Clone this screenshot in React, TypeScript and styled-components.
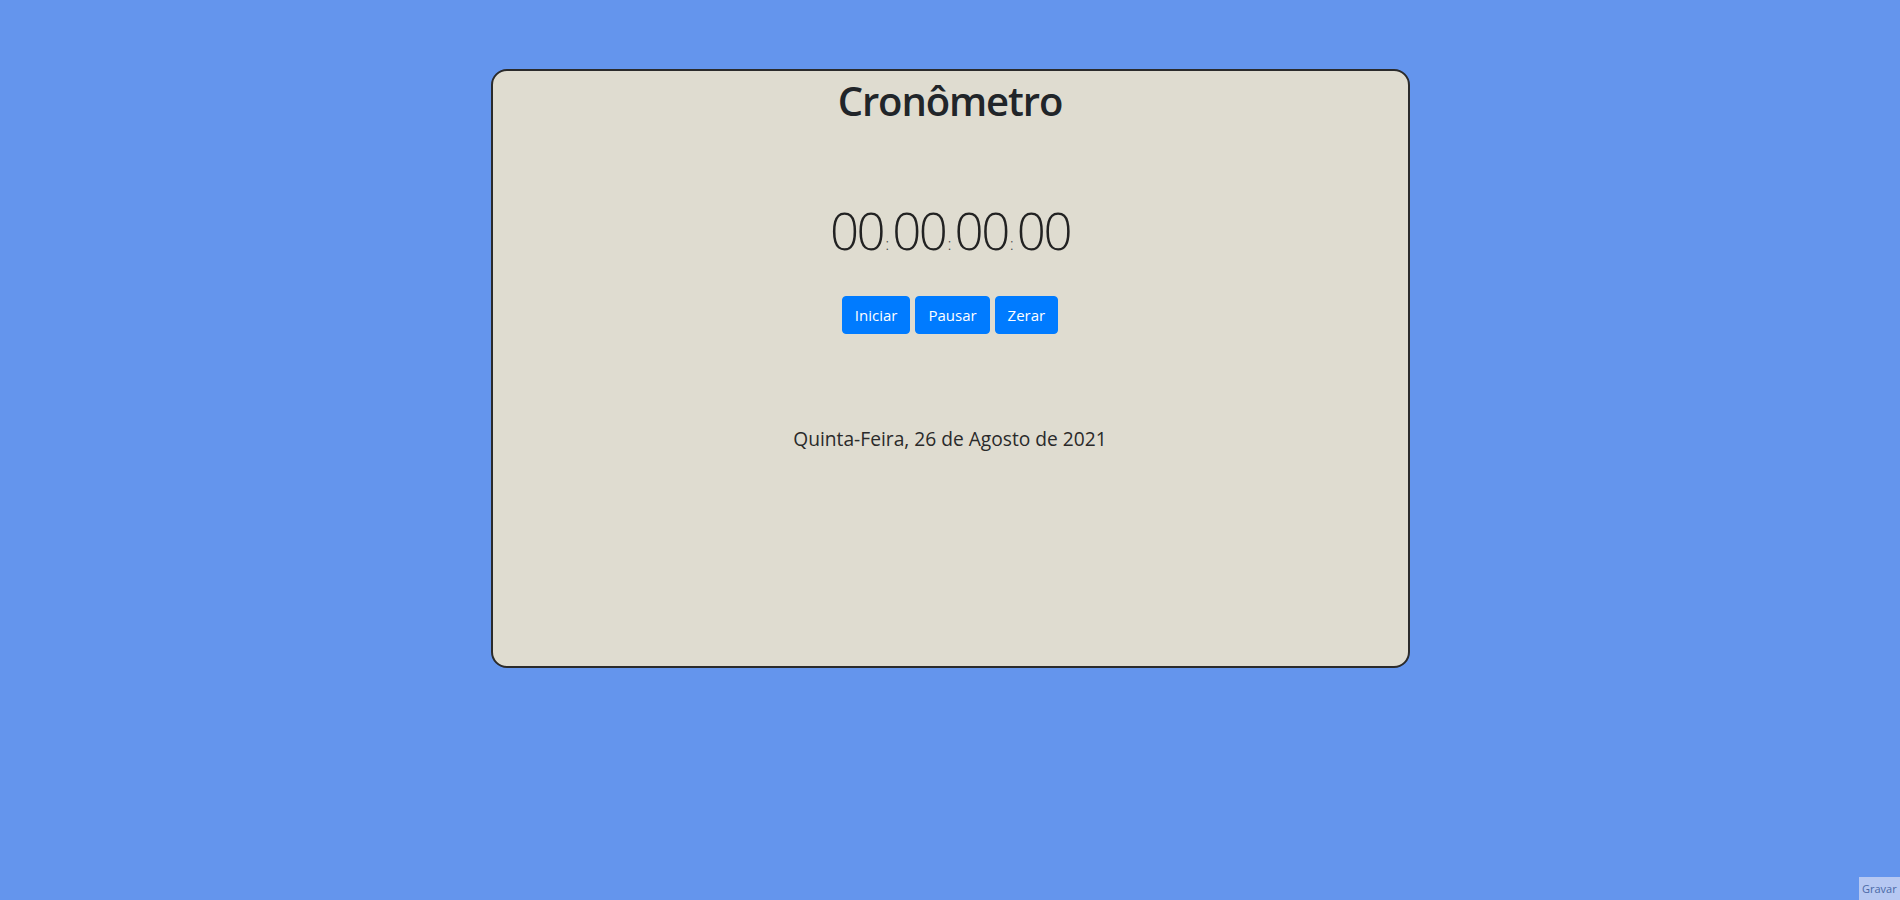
import React from 'react'
import styled, { createGlobalStyle } from 'styled-components'

const GlobalStyle = createGlobalStyle`
  html, body {
    margin: 0;
    padding: 0;
  }
  body {
    font-family: 'Open Sans', 'Noto Sans', sans-serif;
    color: #212529;
    background-color: #6495ed;
  }
`

const App = () => {
  return (
    <>
      <GlobalStyle />
      <Page>
        <Card>
          <Title>Cronômetro</Title>
          <Timer>
            00<Sep>:</Sep>00<Sep>:</Sep>00<Sep>:</Sep>00
          </Timer>
          <Controls>
            <Button>Iniciar</Button>
            <Button>Pausar</Button>
            <Button>Zerar</Button>
          </Controls>
          <DateLine>Quinta-Feira, 26 de Agosto de 2021</DateLine>
        </Card>
      </Page>
      <RecordTab>Gravar</RecordTab>
    </>
  )
}

export default App

const Page = styled.div`
  min-height: 100vh;
  box-sizing: border-box;
  display: flex;
  justify-content: center;
  align-items: flex-start;
  padding-top: 69px;
  background-color: #6495ed;
`

const Card = styled.div`
  width: 919px;
  height: 599px;
  box-sizing: border-box;
  display: flex;
  flex-direction: column;
  align-items: center;
  padding-top: 6px;
  background-color: #dfdcd0;
  border: 2px solid #2b2b2b;
  border-radius: 16px;
`

const Title = styled.h1`
  margin: 0;
  font-size: 40px;
  font-weight: 600;
  line-height: 48px;
  letter-spacing: -1.1px;
`

const Timer = styled.div`
  margin-top: 75px;
  font-size: 51px;
  font-weight: 300;
  line-height: 61px;
  letter-spacing: -2.5px;
  color: #222;
`

const Sep = styled.span`
  display: inline-block;
  margin: 0 3px 0 2px;
  font-size: 17px;
  line-height: 17px;
  letter-spacing: 0;
  color: #444;
`

const Controls = styled.div`
  display: flex;
  gap: 5px;
  margin-top: 35px;
`

const Button = styled.button`
  height: 38px;
  padding: 6px 12px;
  box-sizing: border-box;
  font-family: 'Open Sans', 'Noto Sans', sans-serif;
  font-size: 15px;
  line-height: 24px;
  color: #fff;
  background-color: #007bff;
  border: 1px solid #007bff;
  border-radius: 4px;
  cursor: pointer;
`

const DateLine = styled.p`
  margin: 90px 0 0;
  font-size: 19.2px;
  line-height: 30px;
  color: #2a2a2a;
`

const RecordTab = styled.div`
  position: fixed;
  right: 0;
  bottom: 0;
  width: 41px;
  height: 23px;
  box-sizing: border-box;
  padding: 5px 0 0 3px;
  overflow: hidden;
  white-space: nowrap;
  font-family: 'Open Sans', sans-serif;
  font-size: 11px;
  line-height: 14px;
  color: #4a68a6;
  background-color: #b6c8f2;
`
